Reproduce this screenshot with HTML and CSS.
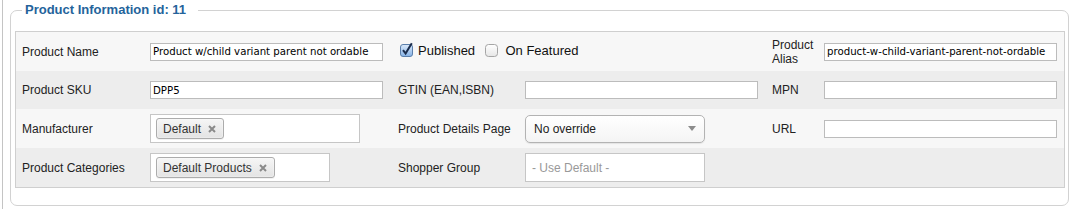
FILE: index.html
```html
<!DOCTYPE html>
<html lang="en">
<head>
    <meta charset="UTF-8">
    <title>Product Information</title>
    <link rel="stylesheet" href="styles.css">
</head>
<body>
    <div class="page">
        <fieldset class="info">
            <legend>Product Information id: 11</legend>

            <table class="info-table">
                <colgroup>
                    <col class="c1"><col class="c2"><col class="c3"><col class="c4"><col class="c5"><col class="c6">
                </colgroup>
                <tr class="row-light r-name">
                    <td>Product Name</td>
                    <td><input class="field" type="text" value="Product w/child variant parent not ordable"></td>
                    <td colspan="2">
                        <span class="check">
                            <svg class="box" width="14" height="15" viewBox="0 0 14 15">
                                <defs>
                                    <linearGradient id="gb" x1="0" y1="0" x2="0" y2="1">
                                        <stop offset="0" stop-color="#dbeafb"/>
                                        <stop offset="1" stop-color="#86b2e6"/>
                                    </linearGradient>
                                </defs>
                                <rect x="0.5" y="2.5" width="12" height="12" rx="2.5" fill="url(#gb)" stroke="#5b7fab"/>
                                <path d="M3 8.2 L5.6 11.4 L11.8 1.2" fill="none" stroke="#1b2d4d" stroke-width="2"/>
                            </svg>
                            Published
                        </span>
                        <span class="check">
                            <svg class="box" width="14" height="15" viewBox="0 0 14 15">
                                <defs>
                                    <linearGradient id="gw" x1="0" y1="0" x2="0" y2="1">
                                        <stop offset="0" stop-color="#ffffff"/>
                                        <stop offset="1" stop-color="#e6e6e6"/>
                                    </linearGradient>
                                </defs>
                                <rect x="0.5" y="2.5" width="12" height="12" rx="3" fill="url(#gw)" stroke="#a5a5a5"/>
                            </svg>
                            On Featured
                        </span>
                    </td>
                    <td class="alias">Product Alias</td>
                    <td><input class="field" type="text" value="product-w-child-variant-parent-not-ordable"></td>
                </tr>
                <tr class="row-dark r-sku">
                    <td>Product SKU</td>
                    <td><input class="field" type="text" value="DPP5"></td>
                    <td>GTIN (EAN,ISBN)</td>
                    <td><input class="field" type="text" value=""></td>
                    <td>MPN</td>
                    <td><input class="field" type="text" value=""></td>
                </tr>
                <tr class="row-light r-man">
                    <td>Manufacturer</td>
                    <td>
                        <div class="chosen wide">
                            <span class="chip">Default
                                <svg class="chip-x" width="8" height="8" viewBox="0 0 8 8"><path d="M1 1 L7 7 M7 1 L1 7" stroke="#8a8a8a" stroke-width="2"/></svg>
                            </span>
                        </div>
                    </td>
                    <td>Product Details Page</td>
                    <td>
                        <div class="select">
                            <span>No override</span>
                            <svg width="8" height="5" viewBox="0 0 8 5"><path d="M0 0 H8 L4 5 Z" fill="#8c8c8c"/></svg>
                        </div>
                    </td>
                    <td>URL</td>
                    <td><input class="field" type="text" value=""></td>
                </tr>
                <tr class="row-dark r-cat">
                    <td>Product Categories</td>
                    <td>
                        <div class="chosen">
                            <span class="chip">Default Products
                                <svg class="chip-x" width="8" height="8" viewBox="0 0 8 8"><path d="M1 1 L7 7 M7 1 L1 7" stroke="#8a8a8a" stroke-width="2"/></svg>
                            </span>
                        </div>
                    </td>
                    <td>Shopper Group</td>
                    <td>
                        <div class="chosen">
                            <span class="placeholder">- Use Default -</span>
                        </div>
                    </td>
                    <td></td>
                    <td></td>
                </tr>
            </table>
        </fieldset>
    </div>
</body>
</html>
```

FILE: styles.css
```css
* {
    box-sizing: border-box;
}
body {
    margin: 0;
    background: #fff;
    font-family: "Liberation Sans", Arial, sans-serif;
    font-size: 12px;
    color: #222;
}
.page {
    margin-left: 2px;
    border-left: 1px solid #c4c4c4;
    height: 209px;
    padding-top: 2px;
}
.info {
    margin: 0 2px 0 7px;
    padding: 13px 3px 17px 4px;
    border: 1px solid #d2d2d2;
    border-radius: 7px;
}
.info legend {
    margin-left: 7px;
    padding: 0 12px 0 3px;
    font-size: 13px;
    line-height: 16px;
    font-weight: bold;
    color: #24639b;
}
.info-table {
    width: 100%;
    table-layout: fixed;
    border-collapse: separate;
    border-spacing: 0;
    border: 1px solid #cfcfcf;
}
.c1 { width: 128px; }
.c2 { width: 248px; }
.c3 { width: 127px; }
.c4 { width: 247px; }
.c5 { width: 52px; }
.c6 { width: 246px; }

.info-table td {
    padding: 0 6px;
    vertical-align: middle;
    white-space: nowrap;
    line-height: 14px;
}
.info-table td.alias {
    white-space: normal;
}
.row-light { background: #f7f7f7; }
.row-dark { background: #ededed; }
.r-name { height: 39px; }
.r-sku { height: 38px; }
.r-man { height: 39px; }
.r-cat { height: 39px; }

.field {
    display: block;
    width: 233px;
    height: 18px;
    margin: 0;
    padding: 0 2px;
    border: 1px solid #bcbcbc;
    border-radius: 0;
    background: #fff;
    font-family: "DejaVu Sans", Verdana, sans-serif;
    font-size: 10.2px;
    color: #000;
    outline: none;
}

.check {
    display: inline-flex;
    align-items: center;
    margin-left: 2px;
    margin-right: 5px;
    font-size: 13px;
    color: #111;
}
.check .box {
    margin-right: 4px;
    margin-top: -3px;
}
.check + .check .box {
    margin-right: 6px;
}

.chosen {
    display: flex;
    align-items: center;
    width: 180px;
    height: 29px;
    padding: 0 5px;
    border: 1px solid #c6c6c6;
    background: #fff;
}
.chosen.wide {
    width: 210px;
}
.chip {
    display: inline-flex;
    align-items: center;
    height: 21px;
    padding: 0 7px 0 6px;
    border: 1px solid #acacac;
    border-radius: 3px;
    background: linear-gradient(#f6f6f6, #e3e3e3);
    box-shadow: inset 0 0 2px #fff, 0 1px 0 rgba(0, 0, 0, 0.05);
    font-size: 12px;
    color: #333;
}
.chip-x {
    margin-left: 7px;
    margin-top: 1px;
}
.placeholder {
    padding-left: 1px;
    color: #999;
    font-size: 12px;
}

.select {
    display: flex;
    align-items: center;
    justify-content: space-between;
    width: 180px;
    height: 28px;
    padding: 0 8px 0 8px;
    border: 1px solid #b3b3b3;
    border-radius: 5px;
    background: linear-gradient(#ffffff, #f4f4f4);
    box-shadow: 0 1px 1px rgba(0, 0, 0, 0.08);
    font-size: 12px;
    color: #222;
}
```
